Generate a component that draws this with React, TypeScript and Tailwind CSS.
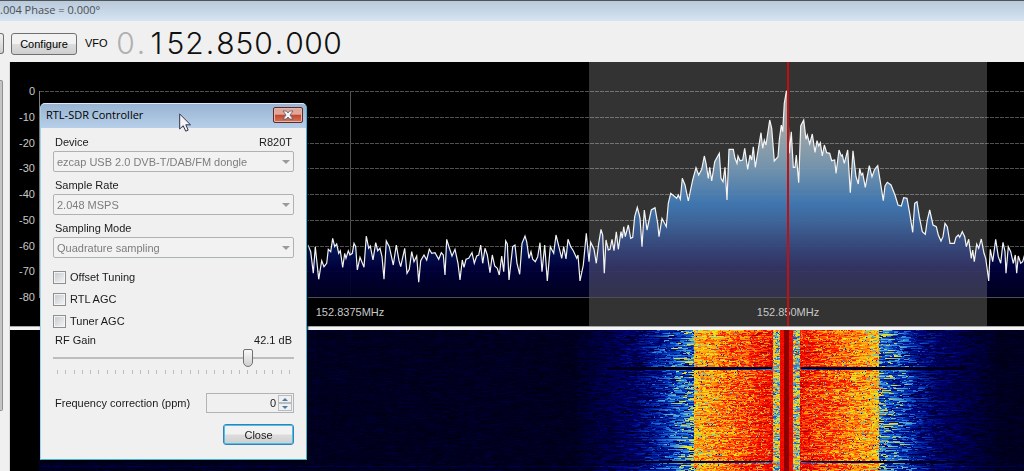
import React, {useLayoutEffect, useRef, useState} from "react";

type Segment = {
    x: number,
    y: number,
    samples: number[]
}

// Spectrum trace, x/y pairs in thirds of a pixel from each segment's origin
const segments: Segment[] = [
    {
        x: 290, y: 158, samples: [
            24, 75, 32, 95, 40, 160, 46, 80, 56, 178, 65, 122, 72, 140, 80, 130, 85, 88, 92, 95, 98, 55, 104, 80,
            110, 72, 116, 100, 121, 92, 128, 142, 134, 100, 138, 115, 145, 92, 150, 105, 157, 100, 162, 70, 167, 80,
            172, 150, 180, 112, 192, 142, 199, 48, 206, 85, 211, 78, 219, 120, 227, 68, 233, 92, 240, 85, 246, 110,
            252, 178, 259, 63, 268, 80, 280, 135, 289, 75, 297, 122, 302, 140, 314, 85, 321, 160, 328, 148, 335, 95,
            342, 125, 350, 108, 356, 187, 362, 122, 372, 105, 380, 120, 388, 88, 395, 100, 405, 98, 416, 118,
            424, 98, 430, 105, 435, 165, 440, 58, 446, 78, 456, 108, 465, 88, 474, 130
        ]
    },
    {
        x: 450, y: 118, samples: [
            0, 300, 7, 240, 12, 262, 18, 238, 26, 235, 36, 218, 43, 250, 50, 228, 56, 225, 62, 195, 68, 250,
            75, 205, 82, 225, 90, 278, 97, 225, 104, 258, 112, 265, 118, 285, 125, 228, 131, 275, 137, 183,
            142, 192, 147, 300, 158, 200, 165, 195, 171, 250, 179, 283, 186, 190, 195, 168, 200, 185, 207, 235,
            213, 215, 218, 238, 226, 245, 233, 230, 240, 188, 246, 275, 254, 195, 262, 303, 271, 200, 281, 220,
            288, 165, 298, 205, 305, 235, 311, 200, 318, 237, 324, 178, 332, 200, 340, 212, 350, 235, 354, 225,
            360, 303, 370, 255, 379, 160, 387, 245, 392, 187, 402, 208, 409, 250, 416, 190, 423, 148, 428, 165,
            433, 280, 438, 180, 445, 210, 450, 208, 456, 178, 462, 212, 469, 155, 475, 208, 483, 155, 487, 175,
            491, 140, 496, 170, 505, 135, 512, 175, 518, 172, 524, 110, 532, 82, 538, 105
        ]
    },
    {
        x: 630, y: 18, samples: [
            0, 415, 6, 500, 13, 390, 21, 450, 34, 390, 45, 383, 53, 430, 57, 470, 66, 415, 79, 440, 85, 370, 92, 340,
            110, 355, 115, 345, 121, 358, 127, 295, 135, 315, 145, 363, 158, 300, 168, 263, 176, 285, 185, 268,
            193, 228, 198, 250, 205, 295, 209, 262, 215, 303, 224, 245, 238, 220, 243, 295, 249, 305, 255, 262,
            261, 360, 267, 208, 280, 208, 285, 235, 291, 250, 294, 228, 300, 242, 308, 240, 314, 205, 323, 268,
            330, 225, 335, 240, 340, 200, 346, 262, 352, 225, 363, 158, 368, 205, 373, 180, 378, 195, 389, 120,
            395, 145, 403, 243, 414, 230, 418, 180, 424, 135, 428, 155, 433, 70, 439, 35, 442, 32, 448, 220,
            454, 155, 457, 210, 460, 262, 465, 262, 469, 225
        ]
    },
    {
        x: 770, y: 18, samples: [
            56, 308, 62, 138, 71, 120, 78, 178, 82, 165, 89, 192, 97, 162, 105, 217, 111, 182, 116, 198, 121, 188,
            127, 228, 133, 195, 140, 218, 149, 220, 155, 242, 164, 240, 168, 280, 177, 210, 184, 228, 187, 225,
            193, 250, 203, 210, 211, 338, 219, 212, 228, 290, 235, 312, 239, 265, 244, 285, 248, 280, 256, 322,
            268, 257, 276, 290, 284, 268, 293, 257, 301, 305, 310, 362, 315, 318, 322, 307, 333, 315, 345, 345,
            354, 375, 364, 378, 371, 353, 381, 355, 390, 405, 398, 457, 404, 370, 411, 365, 418, 410, 427, 455,
            436, 463, 442, 420, 449, 390, 459, 435, 469, 440, 475, 465, 483, 483, 489, 470, 495, 430, 502, 440,
            510, 490, 523, 490, 528, 472, 535, 465, 539, 472, 547, 455, 554, 470, 559, 500, 566, 478, 574, 535,
            578, 510, 583, 545, 590, 492, 596, 505, 604, 477, 612, 520, 617, 535, 622, 570, 626, 603, 631, 508,
            638, 545, 647, 478, 655, 530, 662, 550, 669, 487, 675, 515, 678, 580, 685, 500, 692, 515, 700, 550,
            706, 525, 710, 580, 715, 528, 722, 550, 728, 545, 735, 520
        ]
    }
];

const tracePoints = segments.flatMap(({x, y, samples}) => {
    const points: string[] = [];
    for (let i = 0; i < samples.length; i += 2) {
        points.push(`${(x + samples[i] / 3).toFixed(1)},${(y + samples[i + 1] / 3).toFixed(1)}`);
    }
    return points;
}).join(" ");

const levels = [
    {db: "0", y: 29}, {db: "-10", y: 55}, {db: "-20", y: 81}, {db: "-30", y: 106}, {db: "-40", y: 132},
    {db: "-50", y: 158}, {db: "-60", y: 184}, {db: "-70", y: 209}, {db: "-80", y: 235}
];

// Waterfall palette: [level, r, g, b]
const palette = [
    [0, 0, 0, 0], [0.1, 0, 0, 34], [0.22, 0, 0, 110], [0.34, 0, 40, 165], [0.44, 30, 120, 225],
    [0.52, 110, 180, 190], [0.59, 240, 235, 20], [0.7, 255, 150, 15], [0.82, 255, 20, 0], [0.92, 215, 0, 0],
    [1, 139, 0, 0]
];

function colorAt(level: number): number[] {
    const v = Math.min(1, Math.max(0, level));
    const i = Math.max(1, palette.findIndex((stop) => stop[0] >= v));
    const [a, b] = [palette[i - 1], palette[i]];
    const t = (v - a[0]) / (b[0] - a[0]);
    return [1, 2, 3].map((c) => a[c] + (b[c] - a[c]) * t);
}

function signalLevel(d: number): number {
    if (d < 3) return 1;
    if (d < 7) return 0.86;
    if (d < 14) return 0.57;
    if (d < 93) return 0.85 - 0.21 * ((d - 14) / 79);
    if (d < 150) return 0.46 - 0.26 * ((d - 93) / 57);
    if (d < 210) return 0.2 - 0.1 * ((d - 150) / 60);
    return 0.09;
}

function Waterfall(): JSX.Element {
    const ref = useRef<HTMLCanvasElement>(null);

    useLayoutEffect(() => {
        const canvas = ref.current;
        const ctx = canvas?.getContext("2d");
        if (!canvas || !ctx) return;

        const {width, height} = canvas;
        const image = ctx.createImageData(width, height);
        const center = 747;
        let seed = 20131;
        const random = () => {
            seed = (seed * 1664525 + 1013904223) >>> 0;
            return seed / 4294967296;
        };

        for (let y = 0; y < height; y++) {
            const rowShift = (random() - 0.5) * 0.07;
            let noise = 0;
            for (let x = 0; x < width; x++) {
                const d = Math.abs(x - center);
                const inBand = d < 93;
                // Hold the noise for a few pixels so that it streaks sideways
                if (random() < (inBand ? 0.5 : 0.28)) noise = random() + random() - 1;

                let spread = 0.05;
                if (d < 3) spread = 0;
                else if (d < 7) spread = 0.05;
                else if (d < 14) spread = 0.22;
                else if (inBand) spread = 0.17;
                else if (d < 150) spread = 0.27 - 0.14 * ((d - 93) / 57);
                else if (d < 210) spread = 0.12 - 0.07 * ((d - 150) / 60);

                let level = signalLevel(d) + noise * spread + (d > 14 && d < 160 ? rowShift : 0);
                if (inBand && d > 14 && random() < 0.025) level -= 0.3;

                // Carrier drop-outs
                const dropped = (y >= 37 && y <= 39) || y === 131 || y === 132;
                if (dropped && d > 14 && d < 180) {
                    const edge = y === 39 || y === 132;
                    level = edge && d < 85 ? 0.48 - d / 250 + noise * 0.08 : 0.08;
                }
                if (y === 136 && d > 14) level += 0.07;

                const [r, g, b] = colorAt(level);
                const i = (y * width + x) * 4;
                image.data[i] = r;
                image.data[i + 1] = g;
                image.data[i + 2] = b;
                image.data[i + 3] = 255;
            }
        }
        ctx.putImageData(image, 0, 0);
    }, []);

    return <canvas ref={ref} width={985} height={141} className="block w-full h-full"/>;
}

function Spectrum(): JSX.Element {
    return (
        <svg className="block w-full h-[264px] bg-black" fontFamily='"Liberation Sans", Arial, sans-serif'
             fontSize="11">
            <defs>
                <linearGradient id="fill" gradientUnits="userSpaceOnUse" x1="0" y1="29" x2="0" y2="235">
                    <stop offset="0" stopColor="#9ca2a4"/>
                    <stop offset="0.2" stopColor="#8a9598"/>
                    <stop offset="0.36" stopColor="#5a82a1"/>
                    <stop offset="0.55" stopColor="#1058a3"/>
                    <stop offset="0.65" stopColor="#0e3d82"/>
                    <stop offset="0.76" stopColor="#04185c"/>
                    <stop offset="0.86" stopColor="#00003d"/>
                    <stop offset="1" stopColor="#000020"/>
                </linearGradient>
            </defs>

            {/* Grid */}
            <g stroke="#505050" shapeRendering="crispEdges">
                {levels.slice(0, -1).map(({db, y}) => (
                    <line key={db} x1="30" x2="100%" y1={y + 0.5} y2={y + 0.5} strokeDasharray="4 1"/>
                ))}
                <line x1="340.5" x2="340.5" y1="29" y2="235"/>
            </g>

            <polygon points={`298,235 ${tracePoints} 1015,235`} fill="url(#fill)" fillOpacity="0.94"/>
            <polyline points={tracePoints} fill="none" stroke="#f2f2f2" strokeWidth="1.2"/>

            {/* Filter passband */}
            <rect x="579" y="0" width="398" height="264" fill="#ffffff" fillOpacity="0.2"/>
            <path d="M29.5 29V235.5" stroke="#808080" shapeRendering="crispEdges"/>
            <line x1="30" x2="100%" y1="235.5" y2="235.5" stroke="#4c4c5c" shapeRendering="crispEdges"/>

            <g fill="#c8c8c8" textAnchor="end">
                {levels.map(({db, y}) => <text key={db} x="25" y={y + 4}>{db}</text>)}
            </g>
            <g fill="#c8c8c8" textAnchor="middle">
                <text x="340" y="254">152.8375MHz</text>
                <text x="778" y="254">152.850MHz</text>
            </g>
            <rect x="777" y="0" width="2" height="264" fill="#c01010"/>
        </svg>
    );
}

function Picker(props: {id: string, label: string, note?: string, value: string}): JSX.Element {
    return (
        <div>
            <div className="flex justify-between items-center h-[22px] pt-1 px-[2px]">
                <label htmlFor={props.id}>{props.label}</label>
                {props.note && <span>{props.note}</span>}
            </div>
            <div className="relative">
                <select id={props.id} disabled
                        className="block w-full h-[21px] appearance-none rounded-[2px] border border-[#adb2b5] bg-[#f2f2f2] px-[3px] text-[#7d7d7d] opacity-100">
                    <option>{props.value}</option>
                </select>
                <svg viewBox="0 0 8 4" className="absolute right-[4px] top-[9px] w-2 h-1 fill-[#9a9a9a]">
                    <path d="M0 0h8L4 4z"/>
                </svg>
            </div>
        </div>
    );
}

function Tick(props: {label: string}): JSX.Element {
    return (
        <label className="flex items-center gap-1 h-[22px]">
            <input type="checkbox"
                   className="appearance-none w-[13px] h-[13px] border border-[#8e8f8f] bg-linear-to-br from-[#c4c9cd] to-[#f6f6f6] shadow-[inset_0_0_0_1px_#f4f4f4]"/>
            {props.label}
        </label>
    );
}

function Controller(): JSX.Element {
    const [gain, setGain] = useState(23);
    const [ppm, setPpm] = useState(0);

    return (
        <section className="absolute left-[40px] top-[103px] w-[267px] rounded-t-[5px] border border-[#3fb4d6] border-t-[#dfeaf5] border-l-[#9fd3e6] bg-[#f0f0f0] text-[11px] leading-4 text-[#1a1a1a] shadow-[1px_1px_2px_#000]">
            {/* Title bar */}
            <div className="flex justify-between items-start h-6 pl-[5px] pr-[3px] rounded-t-[4px] bg-linear-to-b from-[#98b4d2] to-[#b7cfe9]">
                <h2 className="pt-[3px] text-[11px] text-black font-['Open_Sans',sans-serif]">RTL-SDR Controller</h2>
                <button aria-label="Close window"
                        className="flex justify-center items-center mt-[3px] w-[30px] h-4 rounded-[2px] border border-[#5c2a2c] bg-linear-to-b from-[#e2a698] from-45% via-[#c2452c] via-50% to-[#d0745c] shadow-[inset_0_0_0_1px_#e6b5a8]">
                    <svg viewBox="0 0 12 10" className="w-3 h-[10px]">
                        <path d="M1 1h3.4L6 3 7.600 1H11L8 5l3 4H7.600L6 7 4.400 9H1l3-4z" fill="#f6f6f6"
                              stroke="#55596b" strokeWidth="0.8"/>
                    </svg>
                </button>
            </div>

            <div className="px-3 pt-px pb-[14px]">
                <Picker id="device" label="Device" note="R820T" value="ezcap USB 2.0 DVB-T/DAB/FM dongle"/>
                <Picker id="rate" label="Sample Rate" value="2.048 MSPS"/>
                <Picker id="mode" label="Sampling Mode" value="Quadrature sampling"/>

                <div className="pt-2">
                    <Tick label="Offset Tuning"/>
                    <Tick label="RTL AGC"/>
                    <Tick label="Tuner AGC"/>
                </div>

                {/* Gain */}
                <div className="flex justify-between px-[2px]">
                    <label htmlFor="gain">RF Gain</label>
                    <output htmlFor="gain">42.1 dB</output>
                </div>
                <input id="gain" type="range" min={0} max={28} value={gain}
                       onChange={(e) => setGain(Number(e.target.value))}
                       className="block w-full h-5 appearance-none bg-transparent [&::-webkit-slider-runnable-track]:h-[2px] [&::-webkit-slider-runnable-track]:bg-[#bcbebe] [&::-webkit-slider-thumb]:appearance-none [&::-webkit-slider-thumb]:-mt-2 [&::-webkit-slider-thumb]:w-[10px] [&::-webkit-slider-thumb]:h-[18px] [&::-webkit-slider-thumb]:rounded-t-[2px] [&::-webkit-slider-thumb]:rounded-b-[5px] [&::-webkit-slider-thumb]:border [&::-webkit-slider-thumb]:border-[#707070] [&::-webkit-slider-thumb]:bg-linear-to-b [&::-webkit-slider-thumb]:from-[#fafafa] [&::-webkit-slider-thumb]:to-[#cfcfcf]"/>
                <div className="flex justify-between h-1 mt-[2px] px-1">
                    {Array.from({length: 29}, (_, i) => <i key={i} className="w-px h-full bg-[#bcbebe]"/>)}
                </div>

                <div className="flex justify-between items-center mt-[19px] pl-[2px]">
                    <label htmlFor="ppm">Frequency correction (ppm)</label>
                    <div className="flex w-[88px] h-5 border border-[#b0b4b6] p-px">
                        <input id="ppm" type="number" value={ppm} onChange={(e) => setPpm(Number(e.target.value))}
                               className="flex-1 min-w-0 px-[2px] text-right appearance-none [&::-webkit-inner-spin-button]:appearance-none"/>
                        <div className="flex flex-col w-[14px]">
                            <button aria-label="Increase" onClick={() => setPpm(ppm + 1)}
                                    className="flex flex-1 justify-center items-center border border-[#b8bcbe]">
                                <svg viewBox="0 0 6 3" className="w-[6px] h-[3px] fill-[#4a7ba6]">
                                    <path d="M0 3h6L3 0z"/>
                                </svg>
                            </button>
                            <button aria-label="Decrease" onClick={() => setPpm(ppm - 1)}
                                    className="flex flex-1 justify-center items-center border border-[#b8bcbe]">
                                <svg viewBox="0 0 6 3" className="w-[6px] h-[3px] fill-[#4a7ba6]">
                                    <path d="M0 0h6L3 3z"/>
                                </svg>
                            </button>
                        </div>
                    </div>
                </div>

                <div className="flex justify-end mt-[11px]">
                    <button className="w-[71px] h-[21px] rounded-[3px] border border-[#3c7fb1] bg-linear-to-b from-[#f2f2f2] from-48% via-[#dcdcdc] via-52% to-[#cfcfcf] text-[11px] leading-4 shadow-[inset_0_0_0_1px_#46c3ee]">
                        Close
                    </button>
                </div>
            </div>
        </section>
    );
}

export default function App(): JSX.Element {
    return (
        <main className="relative flex flex-col min-h-screen overflow-hidden bg-[#f0f0f0] font-['Liberation_Sans',Arial,sans-serif] text-black">
            {/* Window title */}
            <header className="h-[21px] border-t border-[#50555a] bg-linear-to-b from-[#b9cadb] to-[#d6e4f2] text-[11px] leading-[18px] text-[#4a4e53] font-['Open_Sans',sans-serif]">
                .004 Phase = 0.000°
            </header>

            {/* Toolbar */}
            <div className="flex items-center h-[41px] pt-1">
                <button aria-label="Previous"
                        className="w-1 h-[21px] mr-[7px] rounded-r-[3px] border border-l-0 border-[#707070] bg-linear-to-b from-[#f2f2f2] to-[#cfcfcf]"/>
                <button className="w-[66px] h-[22px] rounded-[3px] border border-[#707070] bg-linear-to-b from-[#f2f2f2] from-48% via-[#dddddd] via-52% to-[#cfcfcf] text-[11px] leading-4">
                    Configure
                </button>
                <span className="ml-2 w-[31px] text-[11px]">VFO</span>
                <div className="flex pb-[2px] text-[30px] leading-9 font-light font-['Inter',sans-serif]">
                    {"0.152.850.000".split("").map((char, i) => (
                        <span key={i} className={(char === "." ? "w-3" : "w-[19px]") + " text-center " +
                            (i < 2 ? "text-[#b0b0b0]" : "text-[#101010]")}>{char}</span>
                    ))}
                </div>
            </div>

            <div className="flex flex-1">
                {/* Side panel scrollbar */}
                <div className="w-[10px] pt-[18px] border-r border-[#d8d8d8]">
                    <div className="w-[3px] h-[331px] rounded-r-[2px] border-r border-y border-[#8f8f8f] bg-[#c4c4c4]"/>
                </div>

                <div className="flex flex-col flex-1 min-w-0">
                    <Spectrum/>
                    <div className="h-1 bg-[#f4f4f4] border-t border-[#a8a8a8]"/>
                    <div className="flex-1 min-h-[141px] pl-[29px] bg-black">
                        <Waterfall/>
                    </div>
                </div>
            </div>

            <Controller/>

            {/* Pointer */}
            <svg viewBox="0 0 12 19" className="absolute left-[179px] top-[113px] w-3 h-[19px]">
                <path d="M.7 1v15l3.500-3.300 2.500 5.500 2.500-1.100-2.400-5.300h4.700z" fill="#f4f4f4" stroke="#33334a"/>
            </svg>
        </main>
    );
}
